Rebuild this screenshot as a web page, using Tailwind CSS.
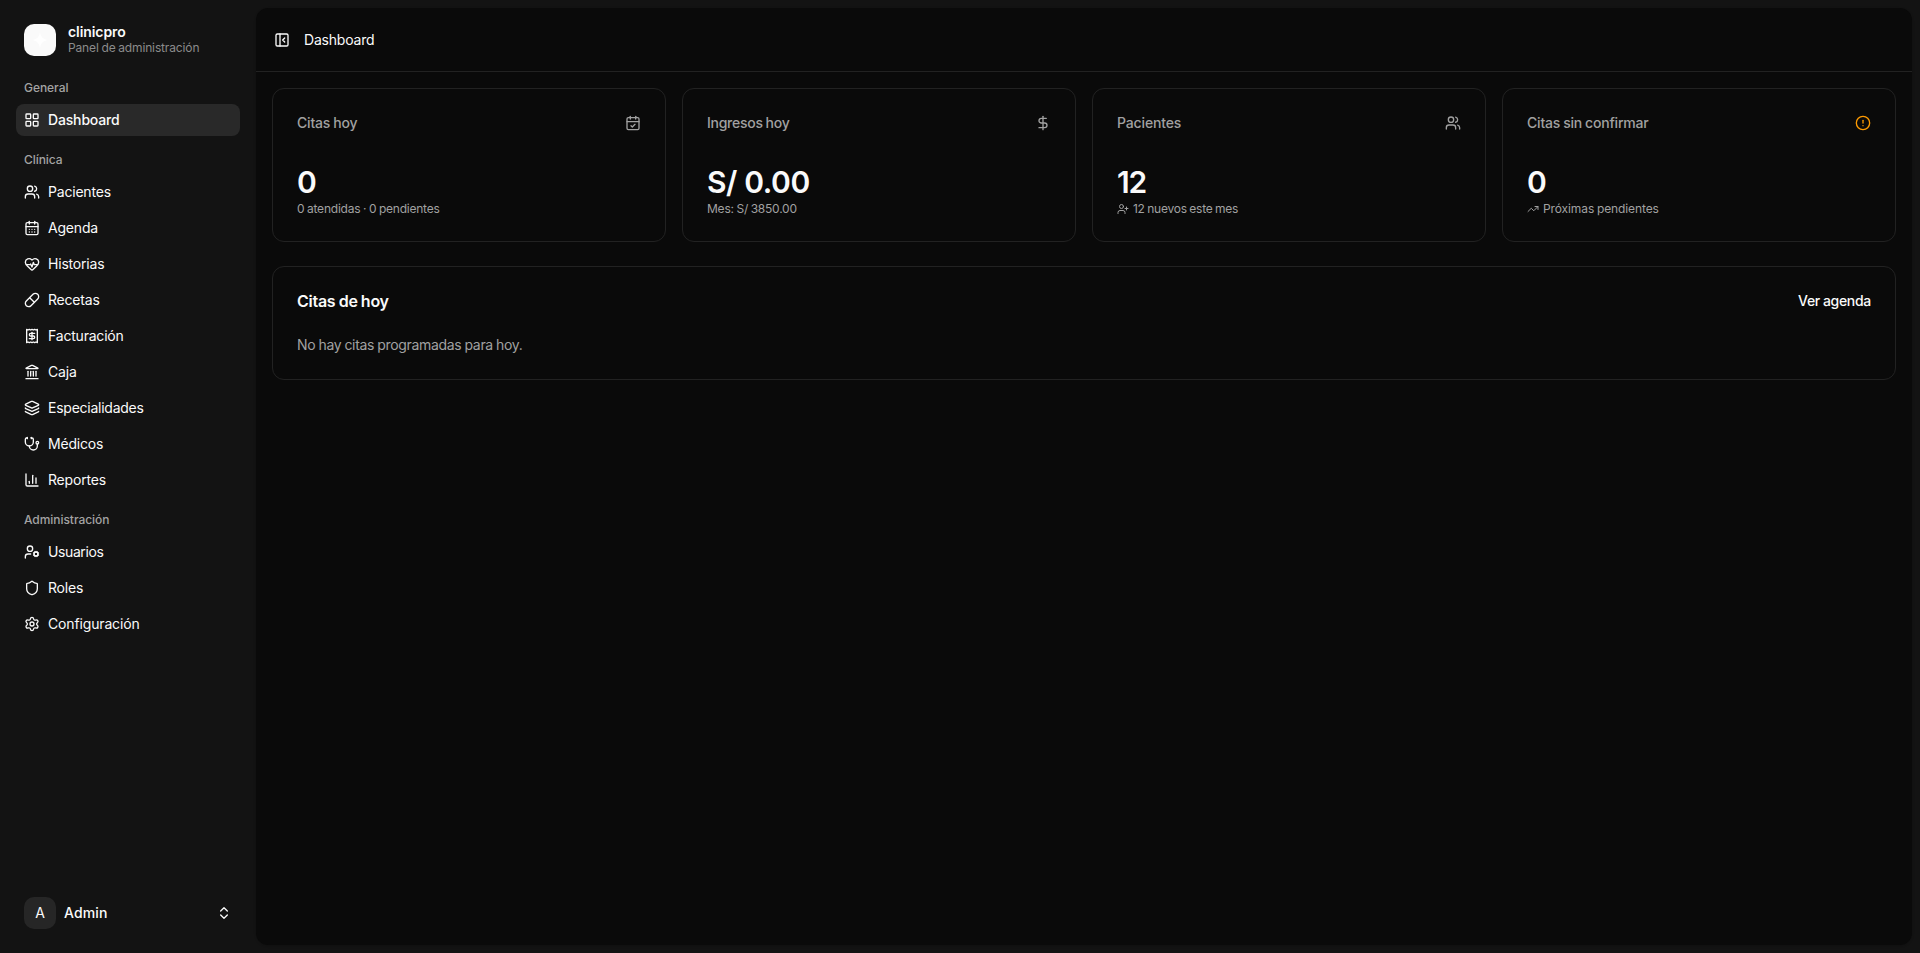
<!DOCTYPE html>
<html lang="es">
  <head>
    <meta charset="UTF-8" />
    <meta name="viewport" content="width=device-width, initial-scale=1.0" />
    <title>Dashboard - clinicpro</title>
    <script src="https://cdn.jsdelivr.net/npm/@tailwindcss/browser@4"></script>
  </head>
  <body class="flex h-screen overflow-hidden bg-[#131313] font-['Inter','Noto_Sans',sans-serif] text-sm text-neutral-50">
    <!-- Icons -->
    <svg class="hidden" xmlns="http://www.w3.org/2000/svg">
      <symbol id="grid" viewBox="0 0 24 24"><rect width="7" height="7" x="3" y="3" rx="1" /><rect width="7" height="7" x="14" y="3" rx="1" /><rect width="7" height="7" x="14" y="14" rx="1" /><rect width="7" height="7" x="3" y="14" rx="1" /></symbol>
      <symbol id="users" viewBox="0 0 24 24"><path d="M16 21v-2a4 4 0 0 0-4-4H6a4 4 0 0 0-4 4v2" /><path d="M16 3.128a4 4 0 0 1 0 7.744" /><path d="M22 21v-2a4 4 0 0 0-3-3.87" /><circle cx="9" cy="7" r="4" /></symbol>
      <symbol id="calendar-days" viewBox="0 0 24 24"><path d="M8 2v4" /><path d="M16 2v4" /><rect width="18" height="18" x="3" y="4" rx="2" /><path d="M3 10h18" /><path d="M8 14h.01" /><path d="M12 14h.01" /><path d="M16 14h.01" /><path d="M8 18h.01" /><path d="M12 18h.01" /><path d="M16 18h.01" /></symbol>
      <symbol id="calendar-check" viewBox="0 0 24 24"><path d="M8 2v4" /><path d="M16 2v4" /><rect width="18" height="18" x="3" y="4" rx="2" /><path d="M3 10h18" /><path d="m9 16 2 2 4-4" /></symbol>
      <symbol id="heart-pulse" viewBox="0 0 24 24"><path d="M2 9.5a5.5 5.5 0 0 1 9.591-3.676.56.56 0 0 0 .818 0A5.49 5.49 0 0 1 22 9.5c0 2.29-1.5 4-3 5.5l-5.492 5.313a2 2 0 0 1-3 .019L5 15c-1.5-1.5-3-3.2-3-5.5" /><path d="M3.22 13H9.5l.5-1 2 4.5 2-7 1.5 3.5h5.27" /></symbol>
      <symbol id="pill" viewBox="0 0 24 24"><path d="m10.5 20.5 10-10a4.95 4.95 0 1 0-7-7l-10 10a4.95 4.95 0 1 0 7 7Z" /><path d="m8.5 8.5 7 7" /></symbol>
      <symbol id="receipt" viewBox="0 0 24 24"><path d="M4 2v20l2-1 2 1 2-1 2 1 2-1 2 1 2-1 2 1V2l-2 1-2-1-2 1-2-1-2 1-2-1-2 1Z" /><path d="M16 8h-6a2 2 0 1 0 0 4h4a2 2 0 1 1 0 4H8" /><path d="M12 17.5v-11" /></symbol>
      <symbol id="landmark" viewBox="0 0 24 24"><path d="M10 18v-7" /><path d="M11.12 2.198a2 2 0 0 1 1.76.006l7.866 3.847c.476.233.31.949-.22.949H3.474c-.53 0-.695-.716-.22-.949z" /><path d="M14 18v-7" /><path d="M18 18v-7" /><path d="M3 22h18" /><path d="M6 18v-7" /></symbol>
      <symbol id="layers" viewBox="0 0 24 24"><path d="M12.83 2.18a2 2 0 0 0-1.66 0L2.6 6.08a1 1 0 0 0 0 1.83l8.58 3.91a2 2 0 0 0 1.66 0l8.58-3.9a1 1 0 0 0 0-1.83z" /><path d="M2 12a1 1 0 0 0 .58.91l8.6 3.91a2 2 0 0 0 1.65 0l8.58-3.9A1 1 0 0 0 22 12" /><path d="M2 17a1 1 0 0 0 .58.91l8.6 3.91a2 2 0 0 0 1.65 0l8.58-3.9A1 1 0 0 0 22 17" /></symbol>
      <symbol id="stethoscope" viewBox="0 0 24 24"><path d="M11 2v2" /><path d="M5 2v2" /><path d="M5 3H4a2 2 0 0 0-2 2v4a6 6 0 0 0 12 0V5a2 2 0 0 0-2-2h-1" /><path d="M8 15a6 6 0 0 0 12 0v-3" /><circle cx="20" cy="10" r="2" /></symbol>
      <symbol id="chart" viewBox="0 0 24 24"><path d="M3 3v16a2 2 0 0 0 2 2h16" /><path d="M18 17V9" /><path d="M13 17V5" /><path d="M8 17v-3" /></symbol>
      <symbol id="user-cog" viewBox="0 0 24 24"><path d="M10 15H6a4 4 0 0 0-4 4v2" /><path d="m14.305 16.53.923-.382" /><path d="m15.228 13.852-.923-.383" /><path d="m16.852 12.228-.383-.923" /><path d="m16.852 17.772-.383.924" /><path d="m19.148 12.228.383-.923" /><path d="m19.53 18.696-.382-.924" /><path d="m20.772 13.852.924-.383" /><path d="m20.772 16.148.924.383" /><circle cx="18" cy="15" r="3" /><circle cx="9" cy="7" r="4" /></symbol>
      <symbol id="shield" viewBox="0 0 24 24"><path d="M20 13c0 5-3.5 7.5-7.66 8.95a1 1 0 0 1-.67-.01C7.5 20.5 4 18 4 13V6a1 1 0 0 1 1-1c2 0 4.5-1.2 6.24-2.72a1.17 1.17 0 0 1 1.52 0C14.51 3.81 17 5 19 5a1 1 0 0 1 1 1z" /></symbol>
      <symbol id="settings" viewBox="0 0 24 24"><path d="M9.671 4.136a2.34 2.34 0 0 1 4.659 0 2.34 2.34 0 0 0 3.319 1.915 2.34 2.34 0 0 1 2.33 4.033 2.34 2.34 0 0 0 0 3.831 2.34 2.34 0 0 1-2.33 4.033 2.34 2.34 0 0 0-3.319 1.915 2.34 2.34 0 0 1-4.659 0 2.34 2.34 0 0 0-3.32-1.915 2.34 2.34 0 0 1-2.33-4.033 2.34 2.34 0 0 0 0-3.831A2.34 2.34 0 0 1 6.35 6.051a2.34 2.34 0 0 0 3.319-1.915" /><circle cx="12" cy="12" r="3" /></symbol>
      <symbol id="chevrons" viewBox="0 0 24 24"><path d="m7 15 5 5 5-5" /><path d="m7 9 5-5 5 5" /></symbol>
      <symbol id="panel-left" viewBox="0 0 24 24"><rect width="18" height="18" x="3" y="3" rx="2" /><path d="M9 3v18" /><path d="m16 15-3-3 3-3" /></symbol>
      <symbol id="dollar" viewBox="0 0 24 24"><path d="M12 2v20" /><path d="M17 5H9.5a3.5 3.5 0 0 0 0 7h5a3.5 3.5 0 0 1 0 7H6" /></symbol>
      <symbol id="alert" viewBox="0 0 24 24"><circle cx="12" cy="12" r="10" /><path d="M12 8v4" /><path d="M12 16h.01" /></symbol>
      <symbol id="user-plus" viewBox="0 0 24 24"><path d="M16 21v-2a4 4 0 0 0-4-4H6a4 4 0 0 0-4 4v2" /><circle cx="9" cy="7" r="4" /><path d="M19 8v6" /><path d="M22 11h-6" /></symbol>
      <symbol id="trending-up" viewBox="0 0 24 24"><path d="M16 7h6v6" /><path d="m22 7-8.5 8.5-5-5L2 17" /></symbol>
    </svg>

    <!-- Sidebar -->
    <aside class="flex w-64 shrink-0 flex-col p-2">
      <div class="flex h-16 items-center gap-3 px-4">
        <div class="flex size-8 items-center justify-center rounded-[10px] bg-neutral-50">
          <svg class="size-5 fill-white" viewBox="0 0 24 24"><path d="M12 2c1 6.500 3.500 9 10 10-6.500 1-9 3.500-10 10-1-6.500-3.500-9-10-10 6.500-1 9-3.500 10-10z" /></svg>
        </div>
        <div class="grid">
          <span class="leading-4 font-semibold tracking-[-0.08px]">clinicpro</span>
          <span class="text-xs leading-4 tracking-[-0.14px] text-[#8b8b8b] [word-spacing:-0.5px]">Panel de administración</span>
        </div>
      </div>

      <nav class="flex flex-1 flex-col gap-2 px-2 tracking-[-0.2px]">
        <div>
          <h2 class="flex h-8 items-center px-2 text-xs font-medium tracking-[-0.05px] text-[#a3a3a3]">General</h2>
          <a href="#" class="flex h-8 items-center gap-2 rounded-lg bg-[#292929] px-2 font-medium tracking-[-0.16px]"><svg class="size-4 fill-none stroke-current stroke-2 [stroke-linecap:round] [stroke-linejoin:round]"><use href="#grid" /></svg>Dashboard</a>
        </div>

        <div>
          <h2 class="flex h-8 items-center px-2 text-xs font-medium tracking-[-0.05px] text-[#a3a3a3]">Clínica</h2>
          <div class="flex flex-col gap-1">
            <a href="#" class="flex h-8 items-center gap-2 rounded-lg px-2"><svg class="size-4 fill-none stroke-current stroke-2 [stroke-linecap:round] [stroke-linejoin:round]"><use href="#users" /></svg>Pacientes</a>
            <a href="#" class="flex h-8 items-center gap-2 rounded-lg px-2"><svg class="size-4 fill-none stroke-current stroke-2 [stroke-linecap:round] [stroke-linejoin:round]"><use href="#calendar-days" /></svg>Agenda</a>
            <a href="#" class="flex h-8 items-center gap-2 rounded-lg px-2"><svg class="size-4 fill-none stroke-current stroke-2 [stroke-linecap:round] [stroke-linejoin:round]"><use href="#heart-pulse" /></svg>Historias</a>
            <a href="#" class="flex h-8 items-center gap-2 rounded-lg px-2"><svg class="size-4 fill-none stroke-current stroke-2 [stroke-linecap:round] [stroke-linejoin:round]"><use href="#pill" /></svg>Recetas</a>
            <a href="#" class="flex h-8 items-center gap-2 rounded-lg px-2"><svg class="size-4 fill-none stroke-current stroke-2 [stroke-linecap:round] [stroke-linejoin:round]"><use href="#receipt" /></svg>Facturación</a>
            <a href="#" class="flex h-8 items-center gap-2 rounded-lg px-2"><svg class="size-4 fill-none stroke-current stroke-2 [stroke-linecap:round] [stroke-linejoin:round]"><use href="#landmark" /></svg>Caja</a>
            <a href="#" class="flex h-8 items-center gap-2 rounded-lg px-2 tracking-[-0.25px]"><svg class="size-4 fill-none stroke-current stroke-2 [stroke-linecap:round] [stroke-linejoin:round]"><use href="#layers" /></svg>Especialidades</a>
            <a href="#" class="flex h-8 items-center gap-2 rounded-lg px-2"><svg class="size-4 fill-none stroke-current stroke-2 [stroke-linecap:round] [stroke-linejoin:round]"><use href="#stethoscope" /></svg>Médicos</a>
            <a href="#" class="flex h-8 items-center gap-2 rounded-lg px-2"><svg class="size-4 fill-none stroke-current stroke-2 [stroke-linecap:round] [stroke-linejoin:round]"><use href="#chart" /></svg>Reportes</a>
          </div>
        </div>

        <div>
          <h2 class="flex h-8 items-center px-2 text-xs font-medium tracking-[-0.05px] text-[#a3a3a3]">Administración</h2>
          <div class="flex flex-col gap-1">
            <a href="#" class="flex h-8 items-center gap-2 rounded-lg px-2 tracking-[-0.4px]"><svg class="size-4 fill-none stroke-current stroke-2 [stroke-linecap:round] [stroke-linejoin:round]"><use href="#user-cog" /></svg>Usuarios</a>
            <a href="#" class="flex h-8 items-center gap-2 rounded-lg px-2"><svg class="size-4 fill-none stroke-current stroke-2 [stroke-linecap:round] [stroke-linejoin:round]"><use href="#shield" /></svg>Roles</a>
            <a href="#" class="flex h-8 items-center gap-2 rounded-lg px-2 tracking-[-0.15px]"><svg class="size-4 fill-none stroke-current stroke-2 [stroke-linecap:round] [stroke-linejoin:round]"><use href="#settings" /></svg>Configuración</a>
          </div>
        </div>
      </nav>

      <button class="mx-2 mb-2 flex h-12 items-center gap-2 rounded-lg px-2">
        <span class="flex size-8 items-center justify-center rounded-[10px] bg-neutral-800">A</span>
        <span class="flex-1 text-left font-medium tracking-[0.15px]">Admin</span>
        <svg class="size-4 fill-none stroke-current stroke-2 [stroke-linecap:round] [stroke-linejoin:round]"><use href="#chevrons" /></svg>
      </button>
    </aside>

    <!-- Content -->
    <main class="my-2 mr-2 flex-1 rounded-xl bg-[#0a0a0a] shadow-sm">
      <header class="flex h-16 items-center gap-[14px] border-b border-[#222222] px-[18px]">
        <svg class="size-4 fill-none stroke-current stroke-2 [stroke-linecap:round] [stroke-linejoin:round]"><use href="#panel-left" /></svg>
        <h1 class="tracking-[-0.2px]">Dashboard</h1>
      </header>

      <div class="flex flex-col gap-6 p-4">
        <div class="grid grid-cols-4 gap-4">
          <div class="flex flex-col gap-[31px] rounded-xl border border-[#222222] p-6">
            <div class="flex h-5 items-center justify-between text-[#a1a1a1]">
              <h3 class="font-medium tracking-[-0.18px] [word-spacing:-0.5px]">Citas hoy</h3>
              <svg class="size-4 fill-none stroke-current stroke-2 [stroke-linecap:round] [stroke-linejoin:round]"><use href="#calendar-check" /></svg>
            </div>
            <div class="flex flex-col gap-px">
              <div class="text-3xl font-semibold">0</div>
              <p class="text-xs tracking-[-0.22px] text-[#a1a1a1] [word-spacing:-0.5px]">0 atendidas · 0 pendientes</p>
            </div>
          </div>

          <div class="flex flex-col gap-[31px] rounded-xl border border-[#222222] p-6">
            <div class="flex h-5 items-center justify-between text-[#a1a1a1]">
              <h3 class="font-medium tracking-[-0.27px] [word-spacing:-0.5px]">Ingresos hoy</h3>
              <svg class="size-4 fill-none stroke-current stroke-2 [stroke-linecap:round] [stroke-linejoin:round]"><use href="#dollar" /></svg>
            </div>
            <div class="flex flex-col gap-px">
              <div class="text-3xl font-semibold tracking-[-0.4px]">S/ 0.00</div>
              <p class="text-xs tracking-[-0.22px] text-[#a1a1a1] [word-spacing:-0.5px]">Mes: S/ 3850.00</p>
            </div>
          </div>

          <div class="flex flex-col gap-[31px] rounded-xl border border-[#222222] p-6">
            <div class="flex h-5 items-center justify-between text-[#a1a1a1]">
              <h3 class="font-medium tracking-[-0.15px]">Pacientes</h3>
              <svg class="size-4 fill-none stroke-current stroke-2 [stroke-linecap:round] [stroke-linejoin:round]"><use href="#users" /></svg>
            </div>
            <div class="flex flex-col gap-px">
              <div class="text-3xl font-semibold tracking-[-1.2px]">12</div>
              <p class="flex items-center gap-1 text-xs tracking-[-0.26px] text-[#a1a1a1] [word-spacing:-0.5px]"><svg class="size-3 fill-none stroke-current stroke-2 [stroke-linecap:round] [stroke-linejoin:round]"><use href="#user-plus" /></svg>12 nuevos este mes</p>
            </div>
          </div>

          <div class="flex flex-col gap-[31px] rounded-xl border border-[#222222] p-6">
            <div class="flex h-5 items-center justify-between text-[#a1a1a1]">
              <h3 class="font-medium tracking-[-0.2px] [word-spacing:-0.5px]">Citas sin confirmar</h3>
              <svg class="size-4 fill-none stroke-amber-500 stroke-2 [stroke-linecap:round] [stroke-linejoin:round]"><use href="#alert" /></svg>
            </div>
            <div class="flex flex-col gap-px">
              <div class="text-3xl font-semibold">0</div>
              <p class="flex items-center gap-1 text-xs tracking-[-0.1px] text-[#a1a1a1] [word-spacing:-0.5px]"><svg class="size-3 fill-none stroke-current stroke-2 [stroke-linecap:round] [stroke-linejoin:round]"><use href="#trending-up" /></svg>Próximas pendientes</p>
            </div>
          </div>
        </div>

        <section class="flex flex-col gap-6 rounded-xl border border-[#222222] p-6">
          <div class="flex h-5 items-center justify-between">
            <h2 class="text-base font-semibold tracking-[-0.26px] [word-spacing:-0.5px]">Citas de hoy</h2>
            <a href="#" class="font-medium tracking-[-0.3px] [word-spacing:-0.5px]">Ver agenda</a>
          </div>
          <p class="tracking-[-0.32px] text-[#a1a1a1] [word-spacing:-0.5px]">No hay citas programadas para hoy.</p>
        </section>
      </div>
    </main>
  </body>
</html>
